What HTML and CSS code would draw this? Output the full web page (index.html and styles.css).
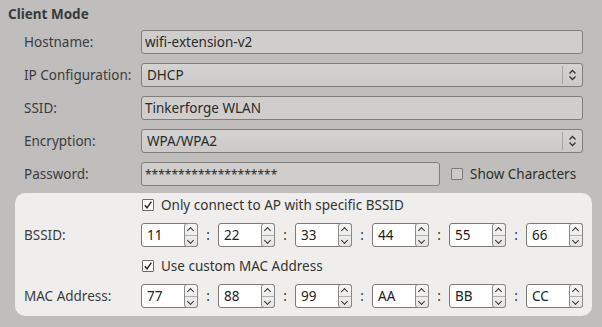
FILE: index.html
```html
<!DOCTYPE html>
<html>
<head>
<meta charset="utf-8">
<link rel="stylesheet" href="styles.css">
</head>
<body>
<div class="page">
  <div class="title">Client Mode</div>
  <div class="form">
    <div class="row">
      <div class="label">Hostname:</div>
      <div class="field input">wifi-extension-v2</div>
    </div>
    <div class="row">
      <div class="label">IP Configuration:</div>
      <div class="field combo">
        <span class="combo-text">DHCP</span>
        <span class="combo-btn"><svg width="9" height="12" viewBox="0 0 9 12"><path d="M1.5 4.5 L4.5 1.5 L7.5 4.5 M1.5 7.5 L4.5 10.5 L7.5 7.5" fill="none" stroke="#333" stroke-width="1.3"/></svg></span>
      </div>
    </div>
    <div class="row">
      <div class="label">SSID:</div>
      <div class="field input">Tinkerforge WLAN</div>
    </div>
    <div class="row">
      <div class="label">Encryption:</div>
      <div class="field combo">
        <span class="combo-text">WPA/WPA2</span>
        <span class="combo-btn"><svg width="9" height="12" viewBox="0 0 9 12"><path d="M1.5 4.5 L4.5 1.5 L7.5 4.5 M1.5 7.5 L4.5 10.5 L7.5 7.5" fill="none" stroke="#333" stroke-width="1.3"/></svg></span>
      </div>
    </div>
    <div class="row">
      <div class="label">Password:</div>
      <div class="field input pwd">********************</div>
      <label class="check show"><span class="box"></span>Show Characters</label>
    </div>
  </div>
  <div class="panel">
    <div class="prow check-row">
      <div class="label"></div>
      <label class="check"><span class="box on"><svg width="10" height="10" viewBox="0 0 10 10"><path d="M1.8 5.2 L4 7.8 L8.4 1.6" fill="none" stroke="#222" stroke-width="1.4"/></svg></span>Only connect to AP with specific BSSID</label>
    </div>
    <div class="prow spin-row">
      <div class="label">BSSID:</div>
      <div class="spins">
        <div class="spin"><span class="val">11</span><span class="sbtn"><i class="up"></i><i class="down"></i></span></div><span class="colon">:</span>
        <div class="spin"><span class="val">22</span><span class="sbtn"><i class="up"></i><i class="down"></i></span></div><span class="colon">:</span>
        <div class="spin"><span class="val">33</span><span class="sbtn"><i class="up"></i><i class="down"></i></span></div><span class="colon">:</span>
        <div class="spin"><span class="val">44</span><span class="sbtn"><i class="up"></i><i class="down"></i></span></div><span class="colon">:</span>
        <div class="spin"><span class="val">55</span><span class="sbtn"><i class="up"></i><i class="down"></i></span></div><span class="colon">:</span>
        <div class="spin"><span class="val">66</span><span class="sbtn"><i class="up"></i><i class="down"></i></span></div>
      </div>
    </div>
    <div class="prow check-row">
      <div class="label"></div>
      <label class="check"><span class="box on"><svg width="10" height="10" viewBox="0 0 10 10"><path d="M1.8 5.2 L4 7.8 L8.4 1.6" fill="none" stroke="#222" stroke-width="1.4"/></svg></span>Use custom MAC Address</label>
    </div>
    <div class="prow spin-row">
      <div class="label">MAC Address:</div>
      <div class="spins">
        <div class="spin"><span class="val">77</span><span class="sbtn"><i class="up"></i><i class="down"></i></span></div><span class="colon">:</span>
        <div class="spin"><span class="val">88</span><span class="sbtn"><i class="up"></i><i class="down"></i></span></div><span class="colon">:</span>
        <div class="spin"><span class="val">99</span><span class="sbtn"><i class="up"></i><i class="down"></i></span></div><span class="colon">:</span>
        <div class="spin"><span class="val">AA</span><span class="sbtn"><i class="up"></i><i class="down"></i></span></div><span class="colon">:</span>
        <div class="spin"><span class="val">BB</span><span class="sbtn"><i class="up"></i><i class="down"></i></span></div><span class="colon">:</span>
        <div class="spin"><span class="val">CC</span><span class="sbtn"><i class="up"></i><i class="down"></i></span></div>
      </div>
    </div>
  </div>
</div>
</body>
</html>
```
FILE: styles.css
```css
* { box-sizing: border-box; }
html, body { margin: 0; padding: 0; }
body {
  background: #bfbebc;
  font-family: "Noto Sans", "DejaVu Sans", sans-serif;
  font-size: 13.5px;
  color: #3c3c3c;
  width: 602px;
  height: 327px;
  overflow: hidden;
}
.page { padding: 5px 19px 0 8px; }
.title {
  font-weight: bold;
  height: 19px;
  line-height: 19px;
  color: #3a3a3a;
}
.form {
  padding-left: 16px;
  padding-top: 6px;
  display: flex;
  flex-direction: column;
  gap: 9px;
}
.row {
  display: flex;
  align-items: center;
  height: 24px;
}
.label {
  width: 117px;
  flex: none;
}
.field {
  flex: 1;
  height: 24px;
  border: 1px solid #7f7e7c;
  border-radius: 3px;
  background: #cfcecc;
  display: flex;
  align-items: center;
  color: #2a2a2a;
}
.input { padding-left: 3px; }
.pwd { flex: none; width: 299px; font-size: 12px; }
.combo {
  background: linear-gradient(#d4d3d1, #cbcac8);
  padding-left: 5px;
}
.combo-text { flex: 1; }
.combo-btn {
  width: 20px;
  height: 18px;
  border-left: 1px solid #a5a4a2;
  display: flex;
  align-items: center;
  justify-content: center;
}
.combo-btn svg { display: block; }
.check {
  display: flex;
  align-items: center;
  gap: 7px;
  color: #333;
}
.show { margin-left: 11px; color: #2e2e2e; }
.box {
  width: 12px;
  height: 12px;
  border: 1px solid #7c7b79;
  border-radius: 1px;
  background: #cacac8;
  display: flex;
  align-items: center;
  justify-content: center;
  flex: none;
}
.box.on { background: #fbfbfb; border-color: #6e6e6e; }
.box svg { display: block; }
.panel {
  margin: 7px -9px 0 7px;
  background: #efeeed;
  border-radius: 10px;
  padding: 0 10px 8px 9px;
  display: flex;
  flex-direction: column;
  gap: 7px;
}
.prow { display: flex; align-items: center; }
.check-row { height: 23px; }
.check-row .check { margin-left: 1px; }
.spin-row { height: 24px; }
.spins {
  flex: 1;
  display: flex;
  align-items: center;
}
.colon { width: 20px; flex: none; text-align: center; color: #333; }
.spin {
  flex: none;
  width: 57px;
  height: 24px;
  display: flex;
  border: 1px solid #7b7a78;
  border-radius: 3px;
  background: #ffffff;
}
.val {
  flex: 1;
  padding-left: 5px;
  display: flex;
  align-items: center;
  color: #222;
}
.sbtn {
  width: 14px;
  margin: -1px -1px -1px 0;
  border: 1px solid #8a8987;
  border-radius: 3px;
  background: linear-gradient(#f6f6f5, #e6e5e4);
  display: flex;
  flex-direction: column;
}
.sbtn i {
  flex: 1;
  position: relative;
  display: block;
}
.sbtn i.up { border-bottom: 1px solid #b0afad; }
.sbtn i::before {
  content: "";
  position: absolute;
  left: 3px;
  width: 4px;
  height: 4px;
  border-left: 1.3px solid #333;
  border-top: 1.3px solid #333;
}
.sbtn i.up::before { top: 4px; transform: rotate(45deg); }
.sbtn i.down::before { top: 2px; transform: rotate(-135deg); }
```
